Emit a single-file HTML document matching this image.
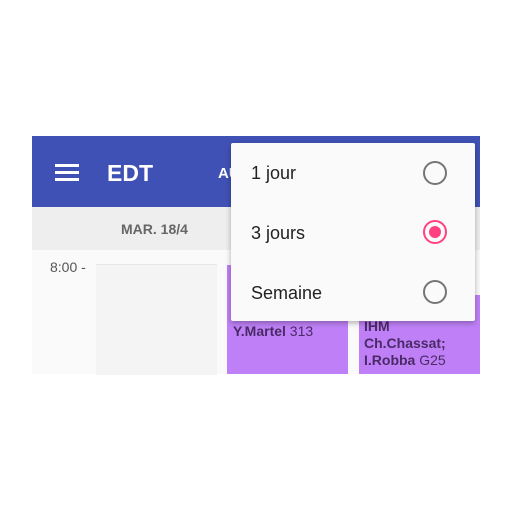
<!DOCTYPE html>
<html><head><style>
body{margin:0;width:512px;height:512px;background:#fff;position:relative;overflow:hidden;font-family:"Liberation Sans",Roboto,sans-serif}
.a{position:absolute}
</style></head><body>
<div class="a" style="left:32px;top:136px;width:448px;height:71px;background:#3f51b5"></div>
<div class="a" style="left:55px;top:164px;width:24px;height:3px;background:#fff"></div>
<div class="a" style="left:55px;top:171px;width:24px;height:3px;background:#fff"></div>
<div class="a" style="left:55px;top:178px;width:24px;height:3px;background:#fff"></div>
<div class="a" style="left:107px;top:160px;color:#fff;font-size:23px;font-weight:bold">EDT</div>
<div class="a" style="left:218px;top:165px;color:#fff;font-size:15px;font-weight:bold">AU</div>
<div class="a" style="left:32px;top:207px;width:448px;height:43px;background:#eeeeee"></div>
<div class="a" style="left:121px;top:221px;color:#666;font-size:14px;font-weight:bold">MAR. 18/4</div>
<div class="a" style="left:32px;top:250px;width:448px;height:124px;background:#fafafa"></div>
<div class="a" style="left:50px;top:259px;color:#555;font-size:14px">8:00 -</div>
<div class="a" style="left:96px;top:264px;width:121px;height:110px;background:#f4f4f4;border-top:1px solid #e6e6e6"></div>
<div class="a" style="left:227px;top:265px;width:121px;height:109px;background:#bf80f7"></div>
<div class="a" style="left:233px;top:323px;color:#4a2a66;font-size:14px"><b>Y.Martel</b> 313</div>
<div class="a" style="left:359px;top:295px;width:121px;height:79px;background:#bf80f7"></div>
<div class="a" style="left:364px;top:318px;color:#4a2a66;font-size:14px;line-height:17px"><b>IHM<br>Ch.Chassat;<br>I.Robba</b> G25</div>
<div class="a" style="left:231px;top:143px;width:244px;height:178px;background:#fafafa;box-shadow:0 2px 6px rgba(0,0,0,.3);border-radius:2px"></div>
<div class="a" style="left:251px;top:163px;color:#222;font-size:18px">1 jour</div>
<div class="a" style="left:251px;top:223px;color:#222;font-size:18px">3 jours</div>
<div class="a" style="left:251px;top:283px;color:#222;font-size:18px">Semaine</div>
<div class="a" style="left:423px;top:161px;width:20px;height:20px;border:2px solid #757575;border-radius:50%"></div>
<div class="a" style="left:423px;top:220px;width:20px;height:20px;border:2px solid #ff4081;border-radius:50%"></div>
<div class="a" style="left:429px;top:226px;width:12px;height:12px;background:#ff4081;border-radius:50%"></div>
<div class="a" style="left:423px;top:280px;width:20px;height:20px;border:2px solid #757575;border-radius:50%"></div>
</body></html>
